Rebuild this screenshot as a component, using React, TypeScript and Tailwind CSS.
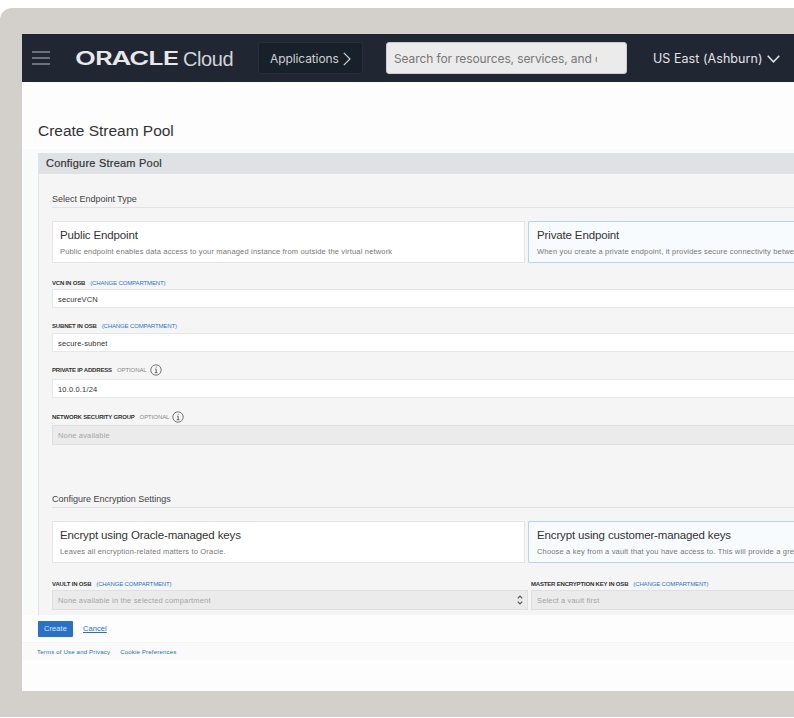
import type { ReactNode } from "react";

function Section({ children }: { children: ReactNode }) {
  return (
    <h3 className="h-[17px] border-b border-[#e1e2e3] text-[9px] leading-[17px] tracking-[-0.01px] text-[#444]">
      {children}
    </h3>
  );
}

function Card({ title, text, active }: { title: string; text: string; active?: boolean }) {
  return (
    <div
      className={
        active
          ? "h-[42px] flex-1 overflow-hidden rounded-l-[2px] border border-r-0 border-[#b9d3ee] bg-[#f8fbfe] pl-2"
          : "h-[42px] w-[473px] shrink-0 border border-[#e4e5e6] bg-white pl-[7px]"
      }
    >
      <div className="mt-[5px] text-[11.5px] leading-[16px] tracking-[-0.14px] text-[#333]">{title}</div>
      <div className="mt-[4px] text-[7.5px] leading-[10px] tracking-[0.17px] text-[#777]">{text}</div>
    </div>
  );
}

function Label({ text, optional, change }: { text: string; optional?: boolean; change?: boolean }) {
  return (
    <div className="flex h-[12px] items-center text-[6px] leading-[12px] text-[#333]">
      <span className="font-bold tracking-[-0.18px]">{text}</span>
      {change && <a className="ml-[5px] tracking-[-0.13px] text-[#1f76d2]">(CHANGE COMPARTMENT)</a>}
      {optional && (
        <>
          <span className="ml-[5px] tracking-[-0.08px] text-[#888]">OPTIONAL</span>
          <svg className="ml-[3px] size-[12px]" viewBox="0 0 12 12" fill="none" stroke="#555">
            <circle cx="6" cy="6" r="5.2" strokeWidth="0.8" />
            <path d="M5 5.2h1.2V8.6M4.8 8.7h2.6M5.8 3.2h.8" strokeWidth="0.9" />
          </svg>
        </>
      )}
    </div>
  );
}

function Field({ value, disabled }: { value: string; disabled?: boolean }) {
  return (
    <div
      className={
        disabled
          ? "h-[20px] flex-1 border border-r-0 border-[#dedfe0] bg-[#ebebeb] pl-[5px] text-[7.5px] leading-[19px] tracking-[0.16px] text-[#a5a5a5]"
          : "h-[19px] flex-1 border border-r-0 border-[#e6e7e8] bg-white pl-[5px] text-[7.5px] leading-[19px] tracking-[0.16px] text-[#333]"
      }
    >
      {value}
    </div>
  );
}

function Header() {
  return (
    <header className="flex h-[48px] items-center bg-[#202733] font-[Inter,sans-serif] text-white">
      <svg className="ml-[10px] h-[14px] w-[18px] shrink-0" viewBox="0 0 18 14" stroke="#b9bcc1" strokeWidth="1.2">
        <path d="M0 1h18M0 7h18M0 13h18" />
      </svg>
      <div className="ml-[25px] flex h-[24px] w-[159px] shrink-0 items-center pt-[2px] text-[#e8e8e8]">
        <span className="w-[108px] shrink-0">
          <span className="inline-block origin-left scale-x-[1.43] text-[19px] font-semibold leading-[24px] tracking-[-0.7px]">
            ORACLE
          </span>
        </span>
        <span className="font-['Liberation_Sans',sans-serif] text-[20px] font-light leading-[24px] tracking-[-0.4px] text-[#d3d5d8]">
          Cloud
        </span>
      </div>
      <div className="ml-[24px] flex h-[32px] w-[105px] shrink-0 items-center rounded-[2px] border border-[#262e39] bg-[#18202a] pl-[11px] text-[12px] tracking-[-0.1px] text-[#cfd1d3]">
        <span className="w-[70px] pt-[2px]">Applications</span>
        <svg className="ml-[3px] mt-[2px] h-[14px] w-[8px]" viewBox="0 0 8 14" fill="none" stroke="currentColor" strokeWidth="1.2">
          <path d="M.8.8 7 7 .8 13.2" />
        </svg>
      </div>
      <div className="ml-[23px] flex h-[32px] w-[241px] shrink-0 items-center rounded-[3px] border border-[#ccc] bg-[#ebebeb] pl-[7px] text-[12px] tracking-[-0.11px] text-[#777]">
        <span className="w-[203px] overflow-hidden whitespace-nowrap pt-[1px]">Search for resources, services, and c</span>
      </div>
      <div className="ml-[26px] flex shrink-0 items-center text-[12.5px] tracking-[0.05px] text-[#e2e3e5]">
        <span className="w-[111px] pt-[2px]">US East (Ashburn)</span>
        <svg className="ml-[3px] mt-[2px] h-[8px] w-[13px]" viewBox="0 0 13 8" fill="none" stroke="currentColor" strokeWidth="1.5">
          <path d="M.7.8l5.8 6 5.8-6" />
        </svg>
      </div>
    </header>
  );
}

export default function App() {
  return (
    <div className="h-[718px] w-[794px] overflow-hidden bg-white pt-[8px] font-['Liberation_Sans',Arial,sans-serif]">
      <div className="h-[709px] rounded-tl-[12px] bg-[#d3d0cb] pl-[22px] pt-[26px]">
        <main className="flex h-[657px] flex-col overflow-hidden whitespace-nowrap bg-[#fdfdfd]">
          <Header />
          <h1 className="h-[67px] pl-[16px] pt-[39px] text-[15.5px] leading-[20px] tracking-[-0.02px] text-[#333]">
            Create Stream Pool
          </h1>
          <div className="h-[466px] overflow-hidden bg-[#f9fafa] pl-[16px] pt-[4px]">
            <section className="h-[462px] border-l border-[#e1e3e4] bg-[#f5f5f5]">
              <h2 className="h-[21px] bg-[#dee2e5] pl-[7px] text-[11px] leading-[21px] tracking-[0.22px] text-[#333] [-webkit-text-stroke:0.2px_#333]">
                Configure Stream Pool
              </h2>
              <div className="pl-[13px] pt-[17px]">
                <Section>Select Endpoint Type</Section>
                <div className="mt-[13px] flex gap-[3px]">
                  <Card
                    title="Public Endpoint"
                    text="Public endpoint enables data access to your managed instance from outside the virtual network"
                  />
                  <Card
                    active
                    title="Private Endpoint"
                    text="When you create a private endpoint, it provides secure connectivity between"
                  />
                </div>
                <div className="pt-[14px]">
                  <Label text="VCN IN OSB" change />
                  <div className="flex">
                    <Field value="secureVCN" />
                  </div>
                </div>
                <div className="pt-[12px]">
                  <Label text="SUBNET IN OSB" change />
                  <div className="mt-[1px] flex">
                    <Field value="secure-subnet" />
                  </div>
                </div>
                <div className="pt-[12px]">
                  <Label text="PRIVATE IP ADDRESS" optional />
                  <div className="mt-[3px] flex">
                    <Field value="10.0.0.1/24" />
                  </div>
                </div>
                <div className="pt-[13px]">
                  <Label text="NETWORK SECURITY GROUP" optional />
                  <div className="mt-[2px] flex">
                    <Field value="None available" disabled />
                  </div>
                </div>
                <div className="pt-[46px]">
                  <Section>Configure Encryption Settings</Section>
                </div>
                <div className="mt-[13px] flex gap-[3px]">
                  <Card title="Encrypt using Oracle-managed keys" text="Leaves all encryption-related matters to Oracle." />
                  <Card
                    active
                    title="Encrypt using customer-managed keys"
                    text="Choose a key from a vault that you have access to. This will provide a grea"
                  />
                </div>
                <div className="flex gap-[3px] pt-[15px]">
                  <div className="w-[476px]">
                    <Label text="VAULT IN OSB" change />
                    <div className="flex">
                      <Field value="None available in the selected compartment" disabled />
                      <div className="flex w-[11px] items-center border-y border-r border-[#dedfe0] bg-[#ebebeb]">
                        <svg className="h-[10px] w-[6px]" viewBox="0 0 6 10" fill="none" stroke="#555" strokeWidth="1.2">
                          <path d="M.8 3.3 3 1l2.2 2.3M.8 6.7 3 9l2.2-2.3" />
                        </svg>
                      </div>
                    </div>
                  </div>
                  <div className="flex-1">
                    <Label text="MASTER ENCRYPTION KEY IN OSB" change />
                    <div className="flex">
                      <Field value="Select a vault first" disabled />
                    </div>
                  </div>
                </div>
              </div>
            </section>
          </div>
          <div className="flex h-[28px] shrink-0 items-center border-b border-[#f3f3f3] pl-[16px] text-[7.5px] tracking-[0.08px]">
            <button className="h-[16px] w-[35px] rounded-[1px] bg-[#2970c9] text-[#d9e6f6]">Create</button>
            <a className="ml-[10px] text-[#2271c6] underline">Cancel</a>
          </div>
          <footer className="flex h-[17px] shrink-0 items-center gap-[10px] bg-[#fafafa] pl-[15px] pt-[1px] text-[6px] tracking-[0.2px] text-[#1c6dc0]">
            <a>Terms of Use and Privacy</a>
            <a>Cookie Preferences</a>
          </footer>
        </main>
      </div>
    </div>
  );
}
